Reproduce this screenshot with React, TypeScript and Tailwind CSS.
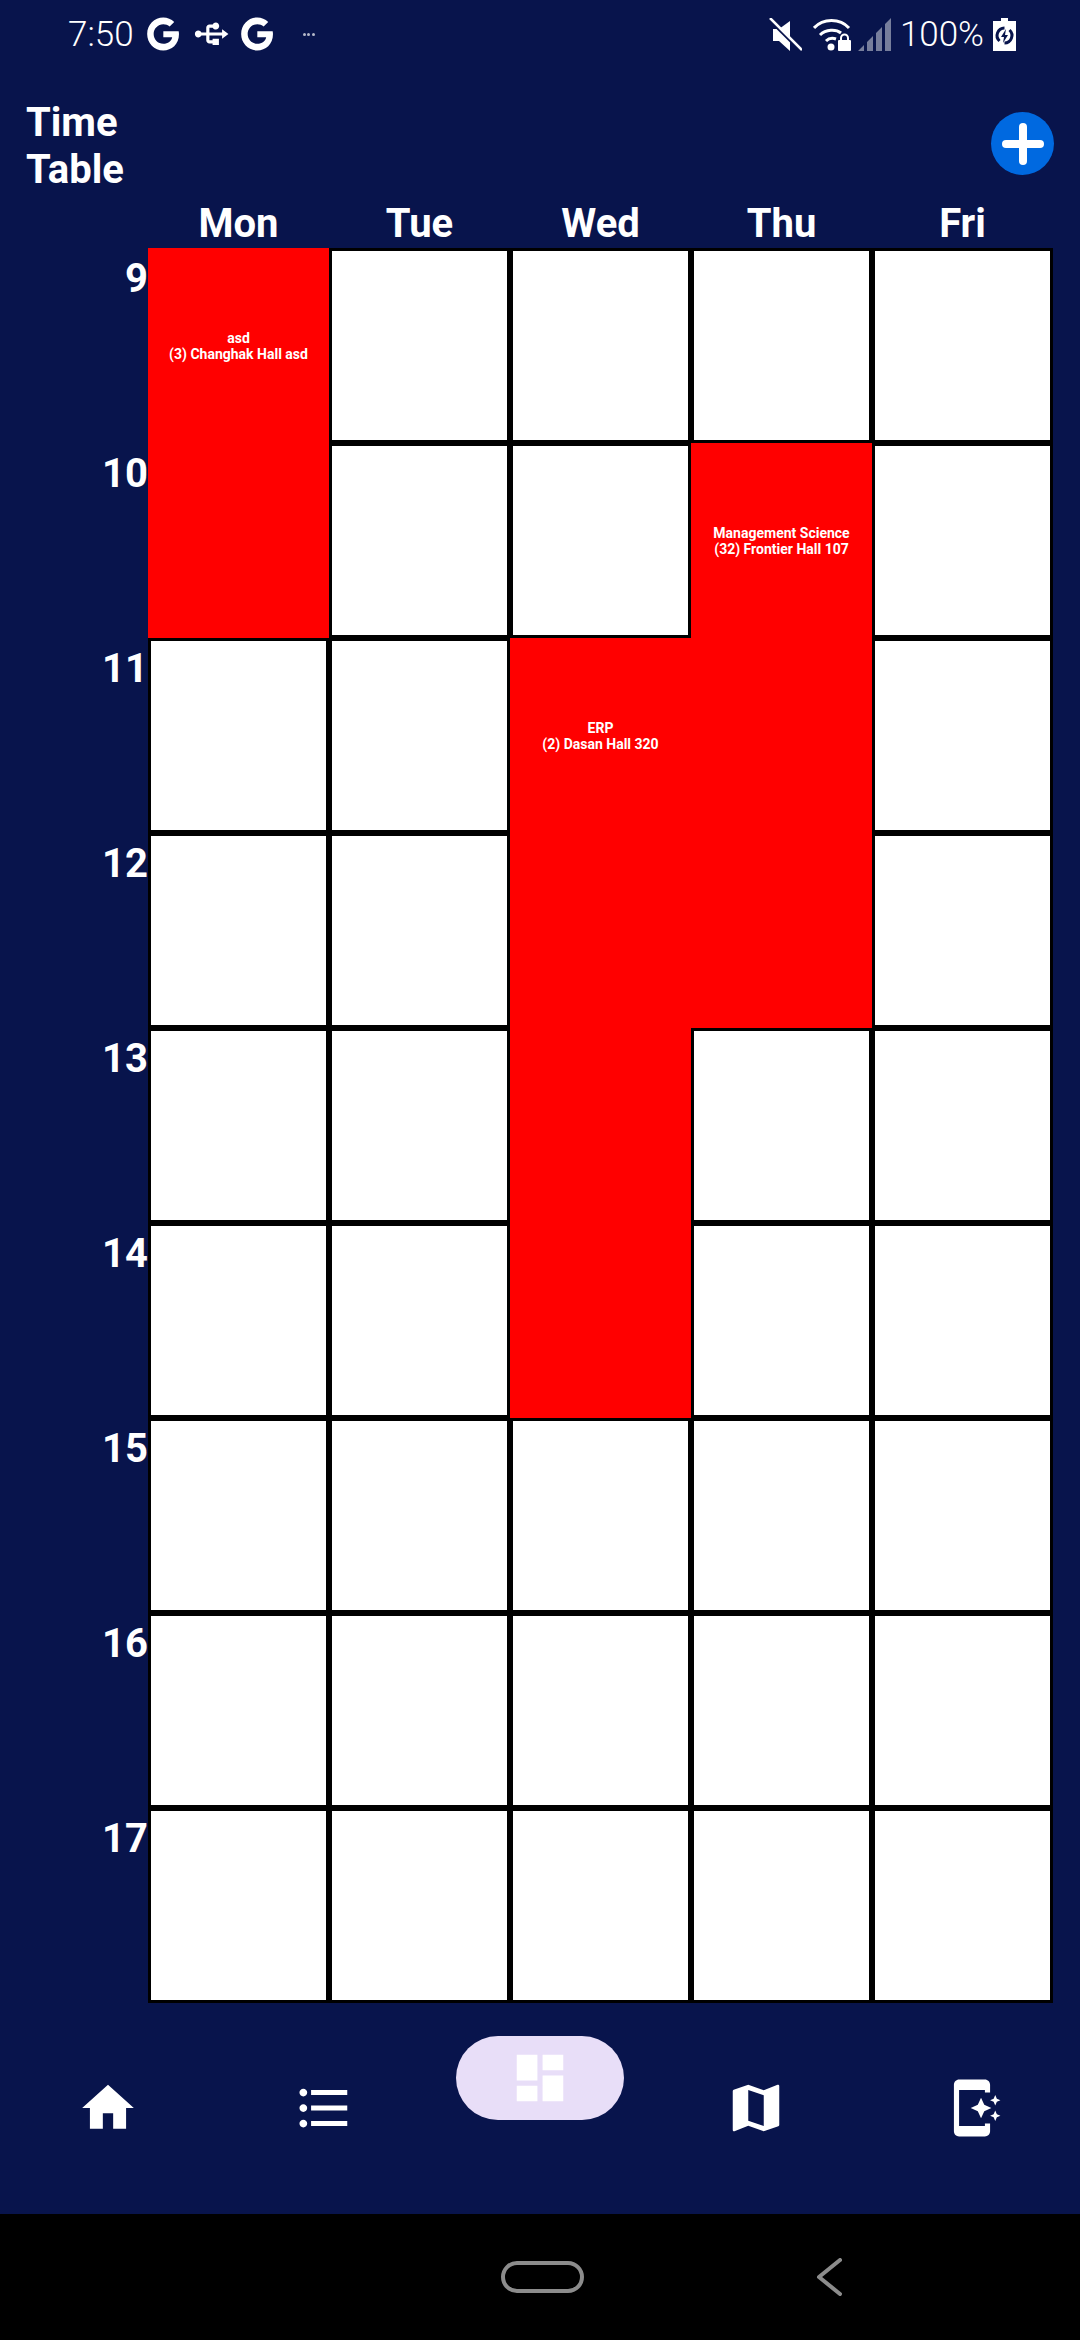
const days = ["Mon", "Tue", "Wed", "Thu", "Fri"];
const hours = [9, 10, 11, 12, 13, 14, 15, 16, 17];
const font = { fontFamily: "Roboto, sans-serif" };

function G({ className }: { className: string }) {
  return (
    <svg viewBox="0 0 24 24" className={className} fill="white">
      <path d="M12.2 10.2v3.9h5.6c-.5 2.5-2.6 4.1-5.6 4.1-3.4 0-6.1-2.8-6.1-6.2s2.7-6.2 6.1-6.2c1.5 0 2.9.5 4 1.5l2.9-2.9C17.2 2.6 14.8 1.6 12.2 1.6 6.5 1.6 2 6.2 2 12s4.5 10.4 10.2 10.4c5.2 0 9.9-3.8 9.9-10.4 0-.6-.1-1.2-.2-1.8z" />
    </svg>
  );
}

function StatusBar() {
  return (
    <div className="flex h-[68px] items-center justify-between text-[35px] leading-none text-white" style={font}>
      <div className="flex items-center pl-[68px]">
        <span className="font-light">7:50</span>
        <G className="ml-[10px] h-[38px] w-[38px]" />
        <svg viewBox="0 0 24 24" className="ml-[10px] h-[38px] w-[38px]" fill="white">
          <path d="M15 7v4h1v2h-3V5h2l-3-4-3 4h2v8H8v-2.07c.7-.37 1.2-1.08 1.2-1.93 0-1.21-.99-2.2-2.2-2.2S4.800 7.790 4.800 9c0 .85.5 1.560 1.200 1.930V13c0 1.110.89 2 2 2h3v3.050c-.71.37-1.200 1.100-1.200 1.950 0 1.220.98 2.200 2.200 2.200s2.200-.98 2.200-2.200c0-.85-.49-1.580-1.200-1.950V15h3c1.110 0 2-.89 2-2v-2h1V7h-4z" transform="rotate(90 12 12)" />
        </svg>
        <G className="ml-[8px] h-[38px] w-[38px]" />
        <div className="ml-[27px] flex gap-[1.500px]">
          <span className="h-[3px] w-[3px] rounded-full bg-white/70" />
          <span className="h-[3px] w-[3px] rounded-full bg-white/70" />
          <span className="h-[3px] w-[3px] rounded-full bg-white/70" />
        </div>
      </div>
      <div className="flex items-center pr-[64px]">
        <svg viewBox="0 0 33 33" className="h-[33px] w-[33px]" fill="white">
          <path d="M4 11h6l11-8v30L10 23H4z" />
          <path d="M-1 1L31 33" stroke="#08144c" strokeWidth="2" />
          <path d="M1 0L33 32" stroke="white" strokeWidth="2.500" />
        </svg>
        <svg viewBox="0 0 38 33" className="ml-[11px] h-[33px] w-[38px]" fill="none" stroke="white" strokeWidth="3">
          <path d="M1 10C10 0 27 0 36 10" />
          <path d="M7 17c6-6 16-6 21-2" />
          <path d="M13 23c3-3 7-3 10-2" />
          <circle cx="18" cy="29" r="3.500" fill="white" stroke="none" />
          <rect x="25" y="22" width="13" height="11" rx="1" fill="white" stroke="none" />
          <path d="M28 23v-3a3.500 3.500 0 0 1 7 0v3" strokeWidth="2" />
        </svg>
        <svg viewBox="0 0 33 33" className="ml-[7px] h-[33px] w-[33px]" fill="white" fillOpacity="0.45">
          <path d="M0 33l6-6v6zM9 33V24l6-6v15zM18 33V15l6-6v24zM27 33V6l6-6v33z" />
        </svg>
        <span className="ml-[9px] font-light">100%</span>
        <svg viewBox="0 0 23 33" className="ml-[9px] h-[33px] w-[23px]" fill="white">
          <path d="M8 0h7v3h8v30H0V3h8z" />
          <path d="M11.500 10a7.500 7.500 0 0 0-5 13M11.500 25a7.500 7.500 0 0 0 5-13" fill="none" stroke="#08144c" strokeWidth="3" />
          <path d="M13 11L8 19h3l-1 6 5-8h-3z" fill="#08144c" />
        </svg>
      </div>
    </div>
  );
}

function Icon({ d, active }: { d: string; active?: boolean }) {
  return (
    <svg viewBox="0 0 24 24" className={active ? "-mt-[30px] h-[62px] w-[62px]" : "h-[62px] w-[62px]"} fill="white">
      <path d={d} />
    </svg>
  );
}

function Event({ a, b, className }: { a: string; b: string; className: string }) {
  return (
    <div className={`bg-[#ff0000] pt-[82px] text-center text-[14px] leading-4 font-bold text-white ${className}`}>
      {a}
      <br />
      {b}
    </div>
  );
}

export default function App() {
  const whiteCount = 36;
  return (
    <div className="flex h-[2340px] w-[1080px] flex-col overflow-hidden bg-[#08144c]" style={font}>
      <StatusBar />
      <div className="relative flex h-[116px] shrink-0 items-start pl-[26px] pt-[31px] text-[40px] leading-[47px] font-bold text-white">
        <div>
          Time
          <br />
          Table
        </div>
        <div className="absolute left-[991px] top-[44px] flex h-[63px] w-[63px] items-center justify-center rounded-full bg-[#0069e0]">
          <div className="relative h-[42px] w-[42px] blur-[0.6px]">
            <div className="absolute left-0 top-[17px] h-[8px] w-[42px] rounded-full bg-white" />
            <div className="absolute left-[17px] top-0 h-[42px] w-[8px] rounded-full bg-white" />
          </div>
        </div>
      </div>
      <div className="flex h-[64px] pl-[148px] text-[40px] leading-[79px] font-bold text-white">
        {days.map((d) => (
          <div key={d} className="w-[181px] text-center">
            {d}
          </div>
        ))}
      </div>
      <div className="flex h-[1755px] shrink-0">
        <div className="w-[148px]">
          {hours.map((h) => (
            <div key={h} className="h-[195px] text-right text-[40px] leading-[61px] font-bold text-white">
              {h}
            </div>
          ))}
        </div>
        <div className="grid grid-cols-[repeat(5,181px)] grid-rows-[repeat(9,195px)]">
          <Event a="asd" b="(3) Changhak Hall asd" className="col-start-1 row-start-1 row-span-2" />
          <Event a="Management Science" b="(32) Frontier Hall 107" className="col-start-4 row-start-2 row-span-3" />
          <Event a="ERP" b="(2) Dasan Hall 320" className="col-start-3 row-start-3 row-span-4" />
          {Array.from({ length: whiteCount }).map((_, i) => (
            <div key={i} className="border-[3px] border-black bg-white" />
          ))}
        </div>
      </div>
      <div className="relative flex-1">
        <div className="absolute left-[456px] top-[33px] h-[84px] w-[168px] rounded-full bg-[#e8def8]" />
        <div className="relative grid grid-cols-5 items-start justify-items-center pt-[74px]">
          <Icon d="M10 20v-6h4v6h5v-8h3L12 3 2 12h3v8z" />
          <Icon d="M4 10.500c-.83 0-1.500.67-1.500 1.500s.67 1.500 1.500 1.500 1.500-.67 1.500-1.500-.67-1.500-1.500-1.500zm0-6c-.83 0-1.500.67-1.500 1.500S3.170 7.500 4 7.500 5.500 6.830 5.500 6 4.830 4.500 4 4.500zm0 12c-.83 0-1.500.68-1.500 1.500s.68 1.500 1.500 1.500 1.500-.68 1.500-1.500-.67-1.500-1.500-1.500zM7 19h14v-2H7v2zm0-6h14v-2H7v2zm0-8v2h14V5H7z" />
          <Icon active d="M3 13h8V3H3v10zm0 8h8v-6H3v6zm10 0h8V11h-8v10zm0-18v6h8V3h-8z" />
          <Icon d="M20.500 3l-.16.03L15 5.100 9 3 3.360 4.900c-.21.07-.36.25-.36.48V20.500c0 .28.22.5.5.5l.16-.03L9 18.900l6 2.100 5.640-1.900c.21-.07.36-.25.36-.48V3.500c0-.28-.22-.5-.5-.5zM15 19l-6-2.110V5l6 2.110V19z" />
          <Icon d="M17 18h2v3c0 1.100-.9 2-2 2H7c-1.100 0-2-.9-2-2V3c0-1.100.9-2 2-2h10c1.100 0 2 .9 2 2v3h-2V5H7v14h10v-1zM20.380 9.620L21 11l.62-1.380L23 9l-1.380-.62L21 7l-.62 1.380L19 9zM15.500 8l-1.250 2.750L11.500 12l2.750 1.250L15.500 16l1.250-2.750L19.500 12l-2.750-1.250zM21 13l-.62 1.380L19 15l1.380.62L21 17l.62-1.380L23 15l-1.380-.62z" />
        </div>
      </div>
      <div className="flex h-[126px] shrink-0 items-center bg-black">
        <div className="ml-[501px] h-[32px] w-[83px] rounded-[16px] border-[4px] border-[#8c8c8c]" />
        <svg viewBox="0 0 26 38" className="ml-[232px] h-[38px] w-[26px]" fill="none" stroke="#8c8c8c" strokeWidth="4" strokeLinecap="round" strokeLinejoin="round">
          <path d="M24 2L3 19l21 17" />
        </svg>
      </div>
    </div>
  );
}
